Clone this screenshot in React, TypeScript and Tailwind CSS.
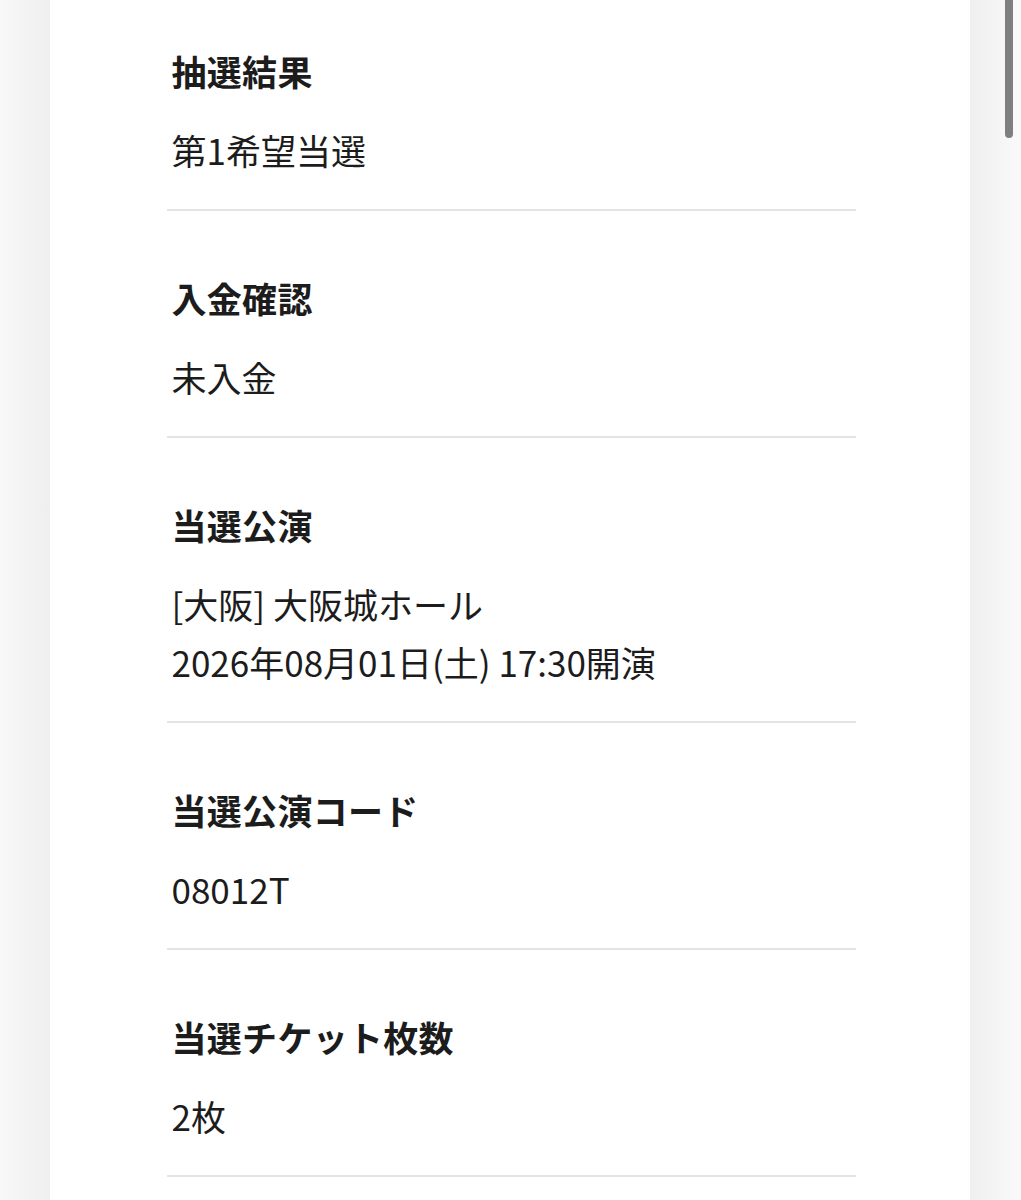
const rows: { label: string; values: string[] }[] = [
  { label: '抽選結果', values: ['第1希望当選'] },
  { label: '入金確認', values: ['未入金'] },
  { label: '当選公演', values: ['[大阪] 大阪城ホール', '2026年08月01日(土) 17:30開演'] },
  { label: '当選公演コード', values: ['08012T'] },
  { label: '当選チケット枚数', values: ['2枚'] },
];

export default function App() {
  return (
    <div
      className="flex min-h-screen w-full text-[#1c1c1c]"
      style={{ fontFamily: '"Noto Sans CJK JP", "Noto Sans", sans-serif' }}
    >
      {/* left gutter */}
      <div className="w-[50px] shrink-0 bg-gradient-to-r from-[#f8f8f8] to-[#efefef]" />

      {/* main panel */}
      <main className="w-[920px] shrink-0 bg-white pt-[42px] pb-[80px]">
        <div className="mx-auto w-[689px] translate-x-[1px]">
          {rows.map((row, i) => (
            <section
              key={row.label}
              className={`${i === 0 ? '' : 'pt-[58px]'} pb-[30px] border-b-2 border-[#e4e4e4]`}
            >
              <h2 className="pl-[5px] text-[35px] leading-[58px] font-bold tracking-[0.3px]">{row.label}</h2>
              <div className="mt-[21px] pl-[5px] text-[35px] leading-[58px] font-normal">
                {row.values.map((v) => (
                  <p key={v}>{v}</p>
                ))}
              </div>
            </section>
          ))}
        </div>
      </main>

      {/* right gutter with scrollbar */}
      <div className="relative flex-1 bg-gradient-to-r from-[#efefef] to-[#fafafa]">
        <div className="absolute -top-[10px] right-[8px] w-[8px] h-[148px] rounded-full bg-[#7f7f7f]" />
      </div>
    </div>
  );
}
